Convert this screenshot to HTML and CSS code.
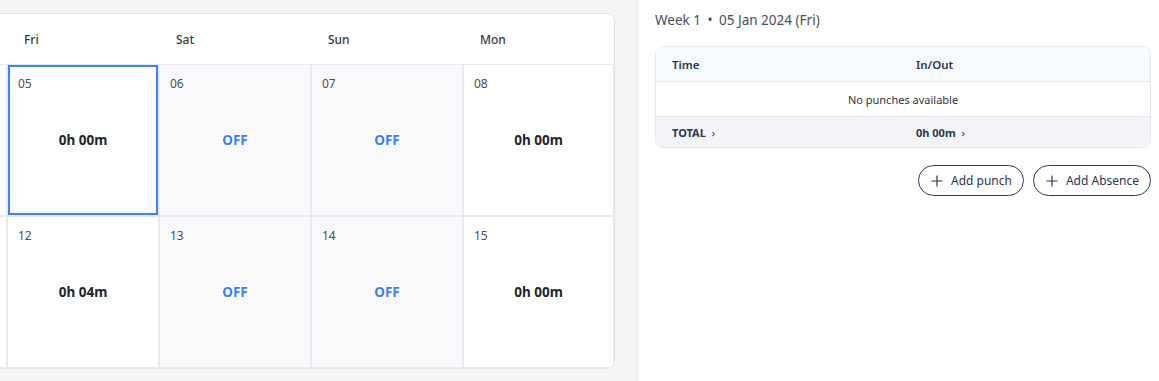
FILE: index.html
```html
<!DOCTYPE html>
<html lang="en">
<head>
    <meta charset="UTF-8">
    <meta name="viewport" content="width=device-width, initial-scale=1.0">
    <title>Timesheet</title>
    <link rel="stylesheet" href="styles.css">
</head>
<body>
    <div class="calendar-pane">
        <div class="calendar">
            <div class="day-head"></div>
            <div class="day-head">Fri</div>
            <div class="day-head">Sat</div>
            <div class="day-head">Sun</div>
            <div class="day-head">Mon</div>

            <div class="cell"></div>
            <div class="cell selected">
                <span class="date">05</span>
                <span class="hours">0h 00m</span>
            </div>
            <div class="cell off">
                <span class="date">06</span>
                <span class="hours">OFF</span>
            </div>
            <div class="cell off">
                <span class="date">07</span>
                <span class="hours">OFF</span>
            </div>
            <div class="cell">
                <span class="date">08</span>
                <span class="hours">0h 00m</span>
            </div>

            <div class="cell"></div>
            <div class="cell">
                <span class="date">12</span>
                <span class="hours">0h 04m</span>
            </div>
            <div class="cell off">
                <span class="date">13</span>
                <span class="hours">OFF</span>
            </div>
            <div class="cell off">
                <span class="date">14</span>
                <span class="hours">OFF</span>
            </div>
            <div class="cell">
                <span class="date">15</span>
                <span class="hours">0h 00m</span>
            </div>
        </div>
    </div>

    <div class="detail-pane">
        <div class="detail-title">Week 1 <span class="dot">&bull;</span> 05 Jan 2024 (Fri)</div>

        <div class="punches">
            <div class="punch-row punch-head">
                <span>Time</span>
                <span>In/Out</span>
            </div>
            <div class="punch-empty">No punches available</div>
            <div class="punch-row punch-total">
                <span>TOTAL <span class="chev">&rsaquo;</span></span>
                <span>0h 00m <span class="chev">&rsaquo;</span></span>
            </div>
        </div>

        <div class="actions">
            <button class="btn">
                <svg width="12" height="12" viewBox="0 0 12 12"><path d="M6 0.5v11M0.5 6h11" stroke="currentColor" stroke-width="1.2" fill="none"/></svg>
                Add punch
            </button>
            <button class="btn">
                <svg width="12" height="12" viewBox="0 0 12 12"><path d="M6 0.5v11M0.5 6h11" stroke="currentColor" stroke-width="1.2" fill="none"/></svg>
                Add Absence
            </button>
        </div>
    </div>
</body>
</html>
```

FILE: styles.css
```css
body {
    margin: 0;
    font-family: "Noto Sans", "Open Sans", sans-serif;
    display: flex;
    height: 381px;
    overflow: hidden;
    background-color: #fff;
}

.calendar-pane {
    width: 639px;
    flex-shrink: 0;
    background-color: #f4f4f4;
    padding-top: 13px;
    overflow: hidden;
}

.calendar {
    margin-left: -146px;
    width: 759px;
    display: grid;
    grid-template-columns: repeat(4, 152px) 151px;
    grid-template-rows: 50px 152px 152px;
    background-color: #fff;
    border: 1px solid #e2e4e8;
    border-radius: 8px;
    overflow: hidden;
}

.day-head {
    padding-left: 17px;
    padding-top: 1px;
    font-size: 12px;
    font-weight: 500;
    color: #333845;
    display: flex;
    align-items: center;
}

.cell {
    box-sizing: border-box;
    border: 1px solid #e6ebf2;
    position: relative;
    display: flex;
    align-items: center;
    justify-content: center;
    padding-bottom: 1px;
}

.cell.off {
    background-color: #f9f9fb;
}

.cell.selected {
    box-shadow: inset 0 0 0 2px #3b82f6;
}

.date {
    position: absolute;
    top: 10px;
    left: 10px;
    font-size: 12px;
    color: #4a4d55;
}

.hours {
    font-size: 13.5px;
    font-weight: 700;
    color: #22252b;
}

.off .hours {
    color: #3b82f6;
}

.detail-pane {
    flex: 1;
    padding: 11px 8px 0 16px;
}

.detail-title {
    font-size: 13.5px;
    color: #4a4d5c;
}

.dot {
    margin: 0 3px;
}

.punches {
    margin-top: 17px;
    border: 1px solid #e6eaf0;
    border-radius: 8px;
    overflow: hidden;
    font-size: 11px;
}

.punch-row {
    display: grid;
    grid-template-columns: 244px 1fr;
    padding: 0 16px;
    align-items: center;
    color: #2b3553;
}

.punch-head {
    height: 34px;
    background-color: #f7fafd;
    border-bottom: 1px solid #e6eaf0;
    font-size: 11.5px;
    font-weight: 600;
}

.punch-empty {
    height: 34px;
    display: flex;
    align-items: center;
    justify-content: center;
    color: #333;
    border-bottom: 1px solid #e6eaf0;
}

.punch-total {
    height: 30px;
    background-color: #f3f4f7;
    font-weight: 700;
}

.chev {
    font-weight: 400;
    margin-left: 3px;
}

.actions {
    display: flex;
    justify-content: flex-end;
    gap: 9px;
    margin-top: 17px;
}

.btn {
    font-family: inherit;
    font-size: 12px;
    color: #2b3553;
    background-color: #fff;
    border: 1px solid #2b3a67;
    border-radius: 16px;
    height: 31px;
    padding: 0 11px 0 12px;
    display: flex;
    align-items: center;
    gap: 8px;
    cursor: pointer;
}
```
